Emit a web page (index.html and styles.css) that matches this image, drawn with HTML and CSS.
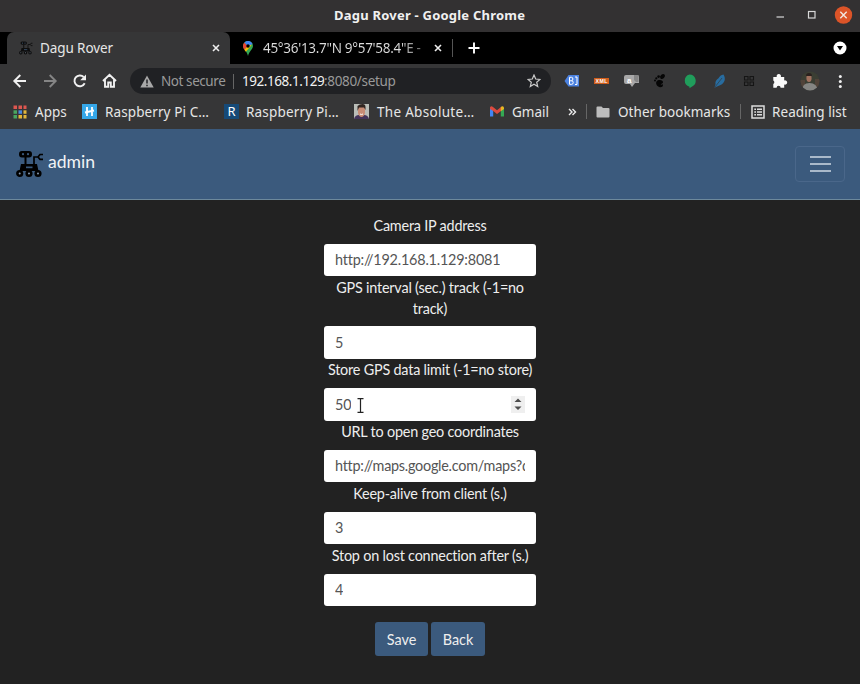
FILE: index.html
```html
<!DOCTYPE html>
<html lang="en">
<head>
<meta charset="utf-8">
<title>Dagu Rover</title>
<link rel="stylesheet" href="styles.css">
</head>
<body>
<svg class="defs" width="0" height="0">
  <symbol id="rover" viewBox="0 0 28 28">
    <path d="M6 1h7q3 0 3 3.200t-3 3.300H6q-3 0-3-3.300T6 1z"/>
    <path d="M8.500 7h2v8h-2zM5 14H21l1.500 7h-19z"/>
    <path d="M18 15V7h5M27 4.500h-3L22 7l2 2.300H27" fill="none" stroke="#000" stroke-width="1.700"/>
    <g fill="#3b5a7d"><circle cx="7" cy="4.200" r="1.100"/><circle cx="12" cy="4.200" r="1.100"/><rect x="10" y="16.500" width="6.500" height="1.700"/></g>
    <g fill="#8296aa" stroke="#000" stroke-width="2.600"><circle cx="3.700" cy="23.500" r="2.300"/><circle cx="13" cy="23.500" r="2.300"/><circle cx="22" cy="23.500" r="2.300"/></g>
  </symbol>
</svg>
<header class="browser">
  <div class="titlebar">
    <span class="win-title">Dagu Rover - Google Chrome</span>
    <svg class="win-buttons" width="80" height="32" viewBox="0 0 80 32">
      <path d="M.5 17h7.500" stroke="#d8d8d8" stroke-width="1.200"/>
      <rect x="32.500" y="11.500" width="6.500" height="6.500" fill="none" stroke="#d8d8d8" stroke-width="1.200"/>
      <circle cx="67.500" cy="15" r="8.700" fill="#dc5428"/>
      <path d="M64.300 11.800l6.400 6.400m0-6.400l-6.400 6.400" stroke="#f2e6e0" stroke-width="1.400"/>
    </svg>
  </div>
  <div class="tabs">
    <div class="tab active">
      <svg class="tab-icon" width="14" height="14"><use href="#rover"/></svg>
      <span class="t t-dagu">Dagu Rover</span>
      <svg class="x" width="8" height="8" viewBox="0 0 8 8"><path d="M1 1l6 6m0-6L1 7"/></svg>
    </div>
    <div class="tab second">
      <svg width="12" height="15" viewBox="0 0 12 15">
        <path d="M6 0a5 5 0 0 1 5 5c0 3-3.800 5-5 10C5 10 1 8 1 5a5 5 0 0 1 5-5z" fill="#34a853"/>
        <path d="M1 5a5 5 0 0 1 1.400-3.500L6 5 2.400 8.800Q1 7 1 5z" fill="#ea4335"/>
        <path d="M6 5l-3.600 3.800 1.500 2L10 3.500z" fill="#fbbc04"/>
        <path d="M2.400 1.500A5 5 0 0 1 10.600 3L6 5z" fill="#4285f4"/><circle cx="6" cy="5" r="1.700" fill="#000"/>
      </svg>
      <span class="t t-geo">45°36'13.7"N 9°57'58.4"E -</span>
      <svg class="x" width="8" height="8" viewBox="0 0 8 8"><path d="M1 1l6 6m0-6L1 7"/></svg>
    </div>
    <i class="tab-sep"></i>
    <svg class="plus" width="12" height="12" viewBox="0 0 12 12"><path d="M6 .5v11M.5 6h11" stroke="#fff" stroke-width="1.900"/></svg>
    <svg class="search" width="14" height="14" viewBox="0 0 14 14"><circle cx="7" cy="7" r="6.500" fill="#fff"/><path d="M4 5h6L7 9.500z" fill="#000"/></svg>
  </div>
  <div class="toolbar">
    <svg class="nav" width="120" height="34" viewBox="0 0 120 34" fill="none" stroke="#f1f1f1" stroke-width="1.900">
      <path d="M26 17H14.500m5.800-6l-6 6 6 6"/>
      <path d="M44 17h11.500m-5.800-6l6 6-6 6" stroke="#858585"/>
      <path d="M84.700 19.300a5.400 5.400 0 1 1-1-6.300"/><path d="M86 10.500v5.800h-5.800z" fill="#f1f1f1" stroke="none"/>
      <path d="M103 17l6.500-6.300L116 17m-11-1.500v7.300h3.200v-4.300h2.600v4.300h3.200v-7.300"/>
    </svg>
    <div class="omnibox">
      <svg width="14" height="13" viewBox="0 0 14 13"><path d="M7 .5L13.700 12.500H.3z" fill="#a8a8a8"/><path d="M7 4.500v4m0 1.200v1.500" stroke="#202124" stroke-width="1.500"/></svg>
      <span class="t t-secure">Not secure</span><i class="bar"></i><span class="t t-host">192.168.1.129</span><span class="t t-path">:8080/setup</span>
      <svg class="star" width="14" height="14" viewBox="0 0 14 14"><path d="M7 1l1.700 4 4.300.4-3.300 2.800 1 4.300L7 10.200l-3.700 2.300 1-4.300L1 5.400 5.300 5z" fill="none" stroke="#cacaca" stroke-width="1.200"/></svg>
    </div>
    <svg class="exts" width="296" height="34" viewBox="0 0 296 34">
      <path d="M.5 17l4-6h10.500v11.500H4.500z" fill="#4c82e0"/><path d="M5.500 13.300v7h2.200q1.500 0 1.500-1.800t-1.500-1.700H5.500m0-3.500h2q1.400 0 1.400 1.700T7.500 16.700M11 13h2v7.500h-2" fill="none" stroke="#fff" stroke-width="1"/>
      <rect x="30" y="14" width="15" height="6" fill="#d15e1c"/><text x="31.500" y="19" font-size="5.200" font-weight="700" fill="#fff" font-family="Liberation Sans" textLength="12">XML</text>
      <path d="M62 11h11q2 0 2 2v6h-4l-3 4-2-3h-4q-2 0-2-2v-5q0-2 2-2z" fill="#a8a8a8"/><path d="M70 11h4.500v7H72l-2-2z" fill="#858585"/><text x="63" y="18.500" font-size="8" font-weight="700" fill="#fff" font-family="Liberation Sans">a</text>
      <g fill="#050505"><ellipse cx="98.500" cy="12.500" rx="2.800" ry="2" transform="rotate(-45 98.500 12.500)"/><circle cx="94.600" cy="12.600" r="1.300"/><circle cx="92.300" cy="14.300" r="1.100"/><circle cx="91" cy="16.500" r="1"/><path d="M92.500 17.500c2-2.500 7-1.500 6.500 1-.3 1.300-2.400 1-2.200 2.200l2-.4c.8 1.800-.9 3.200-2.700 3-2.500-.3-5-3.500-3.600-5.800z"/></g>
      <path d="M125.500 10.500a6.300 6.300 0 0 1 3 11.800l-3 2v-1.600a6.300 6.300 0 0 1 0-12.200z" fill="#209d5b"/>
      <path d="M159.500 10.500c2.500 4 1.500 8.500-3 10.500l-4 1.800-2 1 1-3.500c-.5-2.500.5-4.500 3-6 1-2 2.500-3.300 5-3.800z" fill="#286c9f"/><path d="M151 23l7-9" stroke="#2e495d"/>
      <path d="M180.500 12.500h3.500V16h-3.500zm5.500 0h3.500V16H186zm-5.500 5.500h3.500v3.500h-3.500zm5.500 0h3.500v3.500H186z" fill="none" stroke="#151515" stroke-width="1.100"/>
      <path d="M209.300 13h3.500a2.200 2.200 0 1 1 4 0h3.400v3.400a2.200 2.200 0 1 1 0 4.100v3.200h-3.600a2 2 0 0 0-4 0h-3.300v-3.800a2 2 0 0 0 0-3.500z" fill="#fafafa"/>
      <clipPath id="face"><circle cx="246" cy="17" r="9.500"/></clipPath>
      <g clip-path="url(#face)"><path d="M236 7h20v20h-20z" fill="#3b3e33"/><path d="M236 16h5v7h-5zm15-1h5v9h-5z" fill="#514339"/><path d="M238 27q0-8 7.500-8t8.500 8z" fill="#858582"/><ellipse cx="245" cy="14" rx="2.600" ry="4" fill="#a0705d"/><path d="M242 12q0-3 3-3t3 3z" fill="#2a211e"/></g>
      <g fill="#f0f0f0"><circle cx="276.300" cy="12.500" r="1.500"/><circle cx="276.300" cy="17.500" r="1.500"/><circle cx="276.300" cy="22.500" r="1.500"/></g>
    </svg>
  </div>
  <div class="bookmarks">
    <svg class="b-ico i1" width="14" height="14" viewBox="0 0 14 14"><path d="M.5.500h3.500v3.500H.5zm5 0H9v3.500H5.500zm5 0h3v3.500h-3z" fill="#de5750"/><path d="M.5 5.300H4v3.500H.5z" fill="#49a660"/><path d="M5.500 5.300H9v3.500H5.500z" fill="#4a88df"/><path d="M10.500 5.300h3v3.500h-3z" fill="#e2b63a"/><path d="M.5 10H4v3.500H.5z" fill="#49a660"/><path d="M5.500 10H9v3.500H5.500zm5 0h3v3.500h-3z" fill="#e2b63a"/></svg>
    <span class="t t-apps">Apps</span>
    <svg class="b-ico i2" width="15" height="15" viewBox="0 0 15 15"><path d="M0 0h15v15H0z" fill="#35a7e8"/><path d="M5 3v9m5-9v9M3 8.500l9-2" stroke="#fff" stroke-width="1.800"/></svg>
    <span class="t t-ras1">Raspberry Pi C…</span>
    <span class="b-ico i3">R</span>
    <span class="t t-ras2">Raspberry Pi…</span>
    <svg class="b-ico i4" width="15" height="15" viewBox="0 0 15 15"><path d="M0 0h15v15H0z" fill="#b9bdb8"/><path d="M0 15q1-4 5-4h5q4 0 5 4z" fill="#44345b"/><path d="M4 3h7v6q-1 4-3.500 4T4 9z" fill="#c88d76"/><path d="M3.500 7V2q2-2 5-2t3 3v3L10 3.500H5z" fill="#302521"/><path d="M6 10q1.500 1 3 0" stroke="#fff" fill="none"/></svg>
    <span class="t t-abs">The Absolute…</span>
    <svg class="b-ico i5" width="14" height="11" viewBox="0 0 14 11"><path d="M0 1.500L3.200 3v7.500H0z" fill="#4285f4"/><path d="M14 1.500L10.800 3v7.500H14z" fill="#34a853"/><path d="M0 1.500Q1-.5 3 1l4 3.200L11 1v4L7 8 3.200 5 0 3z" fill="#dc4a3e"/><path d="M10.800 1q2-1.500 3.200.5V3l-3.200 2.300z" fill="#e9b622"/></svg>
    <span class="t t-gmail">Gmail</span>
    <svg class="b-ico i6" width="9" height="8" viewBox="0 0 9 8"><path d="M1 1l3 3-3 3m3.500-6l3 3-3 3" fill="none" stroke="#eee" stroke-width="1.400"/></svg>
    <i class="b-sep s1"></i>
    <svg class="b-ico i7" width="14" height="12" viewBox="0 0 14 12"><path d="M1.500.5h4L7 2h5.500q1 0 1 1v7.500q0 1-1 1h-11q-1 0-1-1v-9q0-1 1-1z" fill="#bdbdbd"/></svg>
    <span class="t t-other">Other bookmarks</span>
    <i class="b-sep s2"></i>
    <svg class="b-ico i8" width="14" height="14" viewBox="0 0 14 14"><path d="M1 1h12v12H1z" fill="none" stroke="#ddd" stroke-width="1.500"/><path d="M3.300 4.200H5m1 0h5M3.300 7H5m1 0h5M3.300 9.800H5m1 0h5" stroke="#ddd" stroke-width="1.400"/></svg>
    <span class="t t-read">Reading list</span>
  </div>
</header>
<nav class="navbar">
  <svg class="logo" width="28" height="28"><use href="#rover"/></svg>
  <span class="brand">admin</span>
  <div class="toggler"><i></i><i></i><i></i></div>
</nav>
<main class="form">
  <label>Camera IP address</label>
  <div class="field"><span>http://192.168.1.129:8081</span></div>
  <label>GPS interval (sec.) track (-1=no<br>track)</label>
  <div class="field"><span>5</span></div>
  <label>Store GPS data limit (-1=no store)</label>
  <div class="field"><span>50</span>
    <svg class="cursor" width="7" height="15" viewBox="0 0 7 15"><path d="M.5.700H3l.5.500.5-.5h2.500M.5 14.300H3l.5-.5.500.500h2.500M3.500 1v13" fill="none" stroke="#222" stroke-width="1.200"/></svg>
    <svg class="spin" width="14" height="17" viewBox="0 0 14 17"><path d="M0 0h14v17H0z" fill="#efefef"/><path d="M3.500 6L7 2.500 10.500 6zm0 4.500L7 14l3.500-3.500z" fill="#4d4d4d"/></svg>
  </div>
  <label>URL to open geo coordinates</label>
  <div class="field url"><span>http://maps.google.com/maps?q</span></div>
  <label>Keep-alive from client (s.)</label>
  <div class="field"><span>3</span></div>
  <label>Stop on lost connection after (s.)</label>
  <div class="field"><span>4</span></div>
  <div class="actions"><button class="save">Save</button><button class="back">Back</button></div>
</main>
</body>
</html>
```
FILE: styles.css
```css
* { box-sizing: border-box; }
body { margin: 0; width: 860px; height: 684px; overflow: hidden; background: #222; font-family: Lato, sans-serif; }
svg { display: block; flex: none; }
.defs { position: absolute; }
.browser { height: 129px; background: #363637; font-family: "Noto Sans", sans-serif; font-size: 13.5px; color: #e6e6e6; }
.t { white-space: nowrap; flex: none; line-height: 20px; }
.titlebar { height: 32px; background: #333132; display: flex; align-items: center; }
.win-title { margin-left: 334px; width: 192px; white-space: nowrap; font-weight: 700; font-size: 13px; letter-spacing: .22px; color: #f0f0f0; margin-top: -2px; }
.win-buttons { margin-left: 250px; }
.tabs { height: 32px; background: #000; display: flex; align-items: center; }
.tab { display: flex; align-items: center; height: 32px; }
.active { margin-left: 7px; width: 223px; padding-left: 12px; background: #363637; border-radius: 7px 7px 0 0; }
.tab-icon { margin-right: 7px; opacity: .75; }
.t-dagu { width: 172px; letter-spacing: -.1px; }
.x path { fill: none; stroke: #eee; stroke-width: 1.6; }
.second { margin-left: 12px; }
.t-geo { margin-left: 9px; width: 171px; overflow: hidden; letter-spacing: -.3px; background: linear-gradient(90deg, #ddd 80%, #333 98%); background-clip: text; color: transparent; }
.tab-sep { width: 1px; height: 18px; background: #555; margin-left: 10px; }
.plus { margin-left: 15px; }
.search { margin-left: auto; margin-right: 13px; }
.toolbar { height: 34px; display: flex; align-items: center; }
.omnibox { margin-left: 10px; width: 421px; height: 26px; border-radius: 13px; background: #202124; display: flex; align-items: center; padding-left: 10px; }
.t-secure { margin-left: 7px; width: 66px; color: #999; letter-spacing: -.43px; }
.bar { width: 1px; height: 15px; background: #666; margin: 0 8px 0 6px; }
.t-host { width: 82px; color: #f1f1f1; letter-spacing: -.44px; }
.t-path { width: 73px; color: #999; letter-spacing: -.33px; }
.star { margin-left: auto; margin-right: 10px; }
.exts { margin-left: 13px; }
.bookmarks { height: 31px; padding-bottom: 4px; display: flex; align-items: center; }
.i1 { margin-left: 13px; }
.t-apps { margin-left: 8px; width: 33px; }
.i2 { margin-left: 14px; }
.t-ras1 { margin-left: 8px; width: 105px; letter-spacing: .1px; }
.i3 { margin-left: 14px; width: 15px; height: 15px; background: #164a78; color: #fff; text-align: center; line-height: 15px; font-size: 13px; flex: none; }
.t-ras2 { margin-left: 7px; width: 93px; letter-spacing: .18px; }
.i4 { margin-left: 15px; }
.t-abs { margin-left: 8px; width: 98px; letter-spacing: .3px; }
.i5 { margin-left: 15px; }
.t-gmail { margin-left: 8px; width: 37px; }
.i6 { margin-left: 19px; }
.b-sep { width: 1px; height: 15px; background: #666; flex: none; }
.s1 { margin-left: 9px; }
.i7 { margin-left: 9px; }
.t-other { margin-left: 8px; width: 113px; letter-spacing: .04px; }
.s2 { margin-left: 9px; }
.i8 { margin-left: 10px; }
.t-read { margin-left: 7px; width: 75px; letter-spacing: .08px; }
.navbar { height: 71px; background: #3b5a7d; border-bottom: 1px solid #6d899c; display: flex; align-items: center; padding: 0 15px 0 16px; }
.logo { margin-top: -1px; }
.brand { margin-left: 4px; color: #f1f3f5; font-size: 17.6px; line-height: 24px; margin-top: -4px; }
.toggler { margin-left: auto; width: 50px; height: 36px; border: 1px solid #4a678a; border-radius: 4px; display: flex; flex-direction: column; align-items: center; justify-content: center; gap: 5px; }
.toggler i { width: 21px; height: 2px; background: #a9b9ca; }
.form { width: 212px; margin: 14.6px auto 0 324px; font-size: 14.4px; letter-spacing: -.2px; line-height: 20.7px; color: #eee; }
label { display: block; text-align: center; padding: 1.5px 0 7.2px; white-space: nowrap; }
.field { height: 32.4px; background: #fff; border-radius: 3px; padding: 1px 11px 0; display: flex; align-items: center; color: #555; }
.field span { overflow: hidden; white-space: nowrap; }
.url { letter-spacing: -.25px; }
.cursor { margin: 2px 0 0 6px; }
.spin { margin: -1px 0 0 auto; }
.actions { display: flex; gap: 3px; margin-top: 15.6px; padding-left: 51px; }
button { height: 34px; padding: 1px 0 0; border: 0; border-radius: 3px; background: #3b5a7d; color: #eee; font: 14.4px Lato, sans-serif; }
.save { width: 53px; }
.back { width: 54px; }
```
